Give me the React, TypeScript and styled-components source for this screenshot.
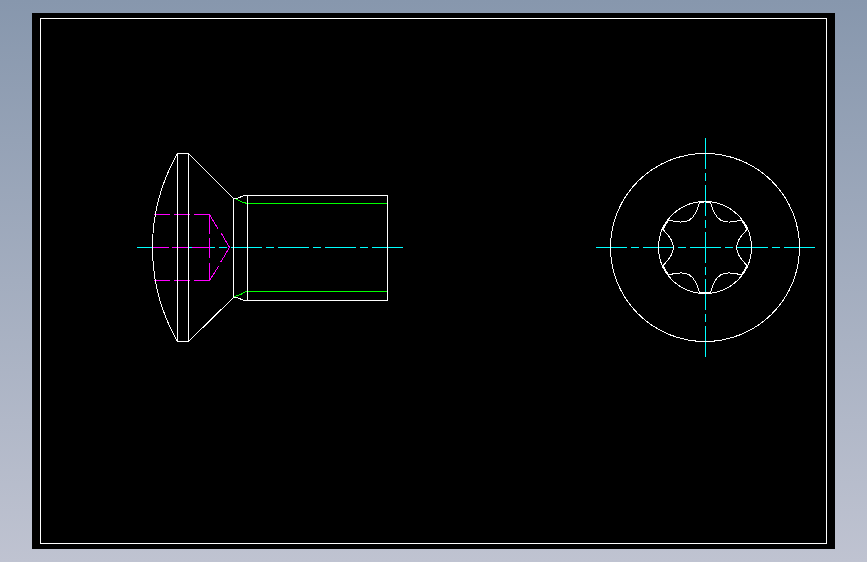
import React from "react";
import styled, { createGlobalStyle } from "styled-components";

const Global = createGlobalStyle`
  html, body { margin: 0; padding: 0; height: 100%; }
  body { overflow: hidden; background: #8a9ab0; }
  #root { height: 100%; }
`;

const Page = styled.main`
  width: 867px;
  height: 562px;
  box-sizing: border-box;
  padding: 13px 32px;
  background: linear-gradient(180deg, #8797ad 0%, #bfc3d1 100%);
`;

const Sheet = styled.section`
  width: 803px;
  height: 536px;
  box-sizing: border-box;
  padding: 5px 8px;
  background: #000;
`;

const Frame = styled.div`
  width: 787px;
  height: 526px;
  box-sizing: border-box;
  border: 1px solid #fff;
`;

const Drawing = styled.svg`
  display: block;
  width: 785px;
  height: 524px;
  shape-rendering: crispEdges;
`;

const Layer = styled.g<{ $color: string }>`
  fill: none;
  stroke: ${(p) => p.$color};
  stroke-width: 1;
`;

const CENTER_DASH = "31 4 8 4";

const polar = (deg: number, r: number) => {
  const a = (deg * Math.PI) / 180;
  return `${(704.5 + r * Math.cos(a)).toFixed(2)} ${(247 - r * Math.sin(a)).toFixed(2)}`;
};

const starPath = () => {
  let d = `M${polar(83, 45.5)}`;
  for (let v = 60; v > -300; v -= 60) {
    d += ` C${polar(v + 9, 28.5)} ${polar(v - 9, 28.5)} ${polar(v - 23, 45.5)}`;
    d += ` A45.5 45.5 0 0 1 ${polar(v - 37, 45.5)}`;
  }
  return d;
};

export default function App() {
  return (
    <Page>
      <Global />
      <Sheet>
        <Frame>
          <Drawing viewBox="40.5 18.5 785 524">
            <Layer $color="#00ffff" strokeDasharray={CENTER_DASH}>
              <path d="M136.5 247H402.5" />
              <path d="M595.5 247H815.5" />
              <path d="M705 137.5V357.5" />
            </Layer>
            <Layer $color="#ff00ff">
              <path d="M153.5 214H169.5M173.5 214H189.5M193.5 214H209" />
              <path d="M153.5 280H169.5M173.5 280H189.5M193.5 280H209" />
              <path d="M151.5 247H168M171.5 247H188M191.5 247H208" />
              <path d="M209 214V233M209 237V257M209 262V280" />
              <path d="M209 214L218 229M221 233L229 247L220 262M218 266L209 280" />
            </Layer>
            <Layer $color="#00ff00">
              <path d="M236 199L243 202L247 203H387" />
              <path d="M234 296L241 293.5L245 291H387" />
            </Layer>
            <Layer $color="#ffffff">
              <path d="M177 153A189.2 189.2 0 0 0 177 341" />
              <path d="M177 153H188V341H177Z" />
              <path d="M188 153L233 198V297L188 341" />
              <path d="M233 198H236L244 195H387V300H244L236 297H233" />
              <path d="M247 195V300" />
              <ellipse cx="704.5" cy="247" rx="94.5" ry="94" />
              <ellipse cx="704.5" cy="247" rx="46.5" ry="46" />
              <path d={starPath()} />
            </Layer>
          </Drawing>
        </Frame>
      </Sheet>
    </Page>
  );
}
